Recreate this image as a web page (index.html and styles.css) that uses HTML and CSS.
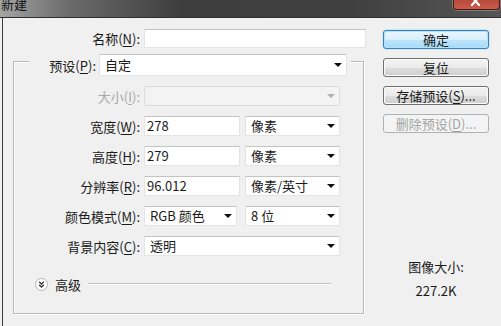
FILE: index.html
```html
<!DOCTYPE html>
<html lang="zh-CN">
<head>
  <meta charset="UTF-8"/>
  <title>新建</title>
  <link rel="stylesheet" href="styles.css">
</head>
<body>
<div class="titlebar">
  <span class="title">新建</span>
  <span class="close-btn">
    <svg width="45" height="9" viewBox="0 0 45 9">
      <path d="M18 -3 L25 5 M25 -3 L18 5" stroke="#fff" stroke-width="2.2" stroke-linecap="round"/>
    </svg>
  </span>
</div>

<div class="dialog">
  <div class="main">
    <div class="name-row">
      <label class="label">名称(<u>N</u>):</label>
      <div class="input name-input"></div>
    </div>

    <div class="group">
      <div class="preset-row">
        <label>预设(<u>P</u>):</label>
        <div class="select preset-select"><span>自定</span><i class="arrow"></i></div>
      </div>

      <div class="row">
        <label class="label disabled">大小(<u>I</u>):</label>
        <div class="select wide off"><span></span><i class="arrow"></i></div>
      </div>

      <div class="row">
        <label class="label">宽度(<u>W</u>):</label>
        <div class="input num">278</div>
        <div class="select unit"><span>像素</span><i class="arrow"></i></div>
      </div>

      <div class="row">
        <label class="label">高度(<u>H</u>):</label>
        <div class="input num">279</div>
        <div class="select unit"><span>像素</span><i class="arrow"></i></div>
      </div>

      <div class="row">
        <label class="label">分辨率(<u>R</u>):</label>
        <div class="input num">96.012</div>
        <div class="select unit"><span>像素/英寸</span><i class="arrow"></i></div>
      </div>

      <div class="row">
        <label class="label">颜色模式(<u>M</u>):</label>
        <div class="select mode"><span>RGB 颜色</span><i class="arrow"></i></div>
        <div class="select unit"><span>8 位</span><i class="arrow"></i></div>
      </div>

      <div class="row">
        <label class="label">背景内容(<u>C</u>):</label>
        <div class="select wide"><span>透明</span><i class="arrow"></i></div>
      </div>

      <div class="advanced">
        <span class="adv-icon">
          <svg width="13" height="13" viewBox="0 0 13 13">
            <circle cx="6.5" cy="6.5" r="6" fill="#fff" stroke="#b4b4b4"/>
            <path d="M4.2 3.8 L6.5 6 L8.8 3.8 M4.2 6.8 L6.5 9 L8.8 6.8" fill="none" stroke="#333" stroke-width="1.3"/>
          </svg>
        </span>
        <span>高级</span>
        <span class="adv-line"></span>
      </div>
    </div>
  </div>

  <div class="side">
    <button class="btn default">确定</button>
    <button class="btn">复位</button>
    <button class="btn">存储预设(<u>S</u>)...</button>
    <button class="btn" disabled>删除预设(<u>D</u>)...</button>

    <div class="info">图像大小:</div>
    <div class="info size">227.2K</div>
  </div>
</div>
</body>
</html>
```

FILE: styles.css
```css
body {
  margin: 0;
  width: 501px;
  height: 326px;
  overflow: hidden;
  background: #f0f0f0;
  font-family: "Noto Sans CJK SC", "Liberation Sans", sans-serif;
  font-size: 13px;
  color: #1a1a1a;
}

u {
  text-decoration: underline;
  text-underline-offset: 2px;
}

/* title bar */

.titlebar {
  height: 17px;
  display: flex;
  justify-content: space-between;
  overflow: hidden;
  background: linear-gradient(to right, #a4a4a4 0, #6a6a6a 70px, #3e3e3e 180px, #404040 70%, #555 100%);
  border-bottom: 1px solid #2e2e2e;
}

.title {
  line-height: 13px;
  margin-top: -3px;
  padding-left: 1px;
  color: #111;
}

.close-btn {
  width: 45px;
  height: 9px;
  margin-right: 1px;
  background: linear-gradient(#b84a3c, #c95c4c);
  border: 1px solid #4a1a14;
  border-top: none;
  border-radius: 0 0 4px 4px;
  box-shadow: 0 0 0 1px rgba(255, 255, 255, 0.25);
}

.close-btn svg {
  display: block;
}

/* dialog body */

.dialog {
  display: flex;
  height: 308px;
  margin-left: 2px;
  border-left: 1px solid #3c3c3c;
}

.main {
  width: 367px;
}

.name-row {
  display: flex;
  align-items: center;
  height: 19px;
  margin-top: 11px;
}

.name-row .label {
  width: 137px;
  margin-right: 4px;
  text-align: right;
}

.input, .select {
  box-sizing: border-box;
  height: 20px;
  background: #fff;
  border: 1px solid #e4e4e4;
  border-top-color: #c4c4c4;
  line-height: 18px;
}

.name-input {
  width: 222px;
  height: 19px;
}

.group {
  box-sizing: border-box;
  width: 351px;
  height: 253px;
  margin: 13px 0 0 10px;
  border: 1px solid #b8b8b8;
  box-shadow: inset 1px 1px 0 #fff, 1px 1px 0 #fff;
}

.preset-row {
  display: flex;
  justify-content: flex-end;
  align-items: center;
  gap: 3px;
  margin: -8px 12px 0 15px;
  padding-right: 4px;
  background: #f0f0f0;
}

.preset-select {
  width: 248px;
  height: 22px;
  line-height: 20px;
  padding-left: 6px;
}

.row {
  display: flex;
  align-items: center;
  gap: 5px;
  height: 20px;
  margin-top: 10px;
}

.row .label {
  width: 126px;
  margin-right: -1px;
  text-align: right;
}

.disabled {
  color: #a8a8a8;
}

.select {
  display: flex;
  justify-content: space-between;
  align-items: center;
  padding: 0 4px 0 5px;
}

.arrow {
  width: 0;
  height: 0;
  border-left: 4px solid transparent;
  border-right: 4px solid transparent;
  border-top: 4px solid #111;
}

.preset-select .arrow {
  margin-right: 0;
}

.wide {
  width: 196px;
}

.off {
  background: #f3f3f3;
  border-color: #dcdcdc;
}

.off .arrow {
  border-top-color: #b0b0b0;
}

.num {
  width: 96px;
  padding-left: 2px;
}

.unit {
  width: 95px;
}

.mode {
  width: 93px;
  margin-right: 3px;
}

.advanced {
  display: flex;
  align-items: center;
  gap: 7px;
  height: 14px;
  margin: 21px 32px 0 21px;
}

.adv-icon svg {
  display: block;
}

.adv-line {
  flex: 1;
  height: 0;
  border-top: 1px solid #c4c4c4;
  border-bottom: 1px solid #fff;
}

/* right column */

.side {
  display: flex;
  flex-direction: column;
  width: 106px;
  padding: 12px 0 0 13px;
}

.btn {
  box-sizing: border-box;
  width: 106px;
  height: 19px;
  margin-bottom: 9px;
  padding: 0;
  font-family: inherit;
  font-size: 13px;
  line-height: 16px;
  color: #1a1a1a;
  background: linear-gradient(#f3f3f3 0, #ebebeb 50%, #dddddd 51%, #cfcfcf 100%);
  border: 1px solid #707070;
  border-radius: 3px;
  box-shadow: inset 0 0 0 1px #fbfbfb;
}

.btn.default {
  background: linear-gradient(#e8f5fc 0, #d9f0fc 50%, #bee6fd 51%, #a7d9f5 100%);
  border-color: #3c7fb1;
  box-shadow: inset 0 0 0 1px #aee3fb, 0 0 2px #7fd0f6;
}

.btn:disabled {
  color: #a4a4a4;
  background: #f4f4f4;
  border-color: #adb2b5;
  box-shadow: none;
}

.info {
  margin-top: 117px;
  line-height: 16px;
  text-align: center;
}

.info.size {
  margin-top: 8px;
}
```
